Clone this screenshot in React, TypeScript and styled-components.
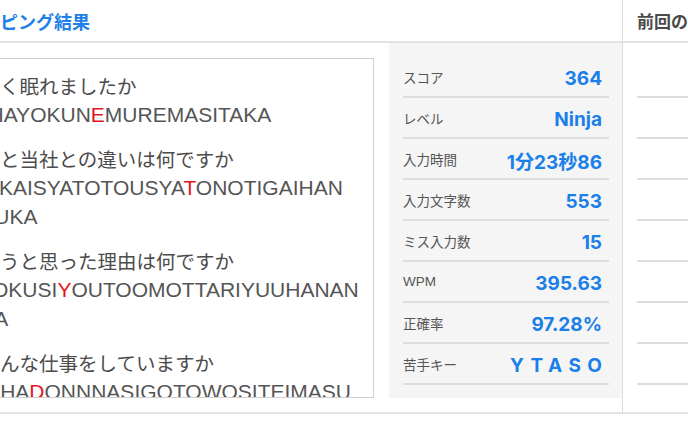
import React from "react"
import styled, { createGlobalStyle } from "styled-components"

const GlobalStyle = createGlobalStyle`
  html, body {
    margin: 0;
    padding: 0;
    background: #fff;
    overflow: hidden;
  }
  body {
    font-family: "Liberation Sans", "Noto Sans CJK JP", sans-serif;
    color: #555;
  }
`

type Question = { jp: string; romaji: string[] }

// "*" marks the key that was mistyped
const questions: Question[] = [
  { jp: "昨日はよく眠れましたか", romaji: ["KINOUHAYOKUN*EMUREMASITAKA"] },
  { jp: "前の会社と当社との違いは何ですか", romaji: ["MAENOKAISYATOTOUSYA*TONOTIGAIHAN", "ANDESUKA"] },
  { jp: "転職しようと思った理由は何ですか", romaji: ["TENSYOKUSI*YOUTOOMOTTARIYUUHANAN", "DESUKA"] },
  { jp: "現在はどんな仕事をしていますか", romaji: ["GENZAIHA*DONNNASIGOTOWOSITEIMASU", "KA"] },
]

const stats: { label: string; value: string; spaced?: boolean }[] = [
  { label: "スコア", value: "364" },
  { label: "レベル", value: "Ninja" },
  { label: "入力時間", value: "1分23秒86" },
  { label: "入力文字数", value: "553" },
  { label: "ミス入力数", value: "15" },
  { label: "WPM", value: "395.63" },
  { label: "正確率", value: "97.28%" },
  { label: "苦手キー", value: "YTASO", spaced: true },
]

const renderRomaji = (line: string) => {
  const parts = line.split(/\*(.)/)
  return parts.map((part, i) => (i % 2 === 1 ? <S.Miss key={i}>{part}</S.Miss> : <span key={i}>{part}</span>))
}

export default function App() {
  return <S.Page>
    <GlobalStyle />
    <S.Panel main>
      <S.Header indent={71}>
        <S.Title accent>タイピング結果</S.Title>
      </S.Header>
      <S.Body>
        <S.TextBox>
          {questions.map(q => (
            <S.Question key={q.jp}>
              <S.JpLine>{q.jp}</S.JpLine>
              {q.romaji.map(line => <S.RomajiLine key={line}>{renderRomaji(line)}</S.RomajiLine>)}
            </S.Question>
          ))}
        </S.TextBox>
        <S.Stats>
          {stats.map(s => (
            <S.StatRow key={s.label}>
              <S.Label>{s.label}</S.Label>
              <S.Value spaced={s.spaced}>{s.value}</S.Value>
            </S.StatRow>
          ))}
        </S.Stats>
      </S.Body>
    </S.Panel>
    <S.Panel>
      <S.Header indent={14}>
        <S.Title>前回のタイピング結果</S.Title>
      </S.Header>
      <S.PrevList>
        {stats.map(s => <S.StatRow key={s.label} />)}
      </S.PrevList>
    </S.Panel>
  </S.Page>
}

const S = {
  Page: styled.div`
    display: flex;
    margin-left: -107px;
    border-bottom: 2px solid #e2e2e2;
    white-space: nowrap;
  `,
  Panel: styled.section<{ main?: boolean }>`
    display: flex;
    flex-direction: column;
    flex: ${p => (p.main ? "0 0 730px" : "1 1 auto")};
    min-width: 0;
    overflow: hidden;
    border-right: ${p => (p.main ? "1px solid #dcdcdc" : "none")};
    box-sizing: border-box;
  `,
  Header: styled.div<{ indent: number }>`
    display: flex;
    align-items: center;
    height: 41px;
    padding-left: ${p => p.indent}px;
    border-bottom: 2px solid #e2e2e2;
  `,
  Title: styled.h2<{ accent?: boolean }>`
    margin: 0;
    font-family: "Noto Sans CJK JP", sans-serif;
    font-size: ${p => (p.accent ? "18px" : "17px")};
    font-weight: 700;
    color: ${p => (p.accent ? "#1e80e8" : "#4a4a4a")};
  `,
  Body: styled.div`
    display: flex;
    gap: 15px;
    padding: 0 0 14px 14px;
  `,
  TextBox: styled.div`
    flex: 0 0 467px;
    box-sizing: border-box;
    height: 340px;
    margin-top: 15px;
    padding: 12px 14px 0;
    border: 1px solid #cfcfcf;
    background: #fff;
    overflow: hidden;
  `,
  Question: styled.div`
    & + & {
      margin-top: 15px;
    }
  `,
  JpLine: styled.div`
    font-family: "Noto Sans CJK JP", sans-serif;
    font-size: 19.5px;
    line-height: 29px;
    color: #4c4c4c;
  `,
  RomajiLine: styled.div`
    font-family: "Liberation Sans", sans-serif;
    font-size: 21px;
    line-height: 29px;
    color: #555;
  `,
  Miss: styled.span`
    color: #e5141e;
  `,
  Stats: styled.div`
    flex: 1;
    background: #f5f5f5;
    padding: 14px 13px 0 14px;
  `,
  StatRow: styled.div`
    display: flex;
    align-items: center;
    justify-content: space-between;
    height: 39px;
    padding-right: 7px;
    border-bottom: 2px solid #dddddd;
  `,
  Label: styled.span`
    font-family: "Liberation Sans", "Noto Sans CJK JP", sans-serif;
    font-size: 13.5px;
    color: #555;
  `,
  Value: styled.span<{ spaced?: boolean }>`
    padding-top: 3px;
    font-family: Inter, "Noto Sans CJK JP", sans-serif;
    font-size: 19px;
    font-weight: 700;
    color: #1a7fe8;
    letter-spacing: ${p => (p.spaced ? "6.5px" : "0")};
    margin-right: ${p => (p.spaced ? "-6.5px" : "0")};
  `,
  PrevList: styled.div`
    padding: 14px 0 0 14px;
  `,
}
